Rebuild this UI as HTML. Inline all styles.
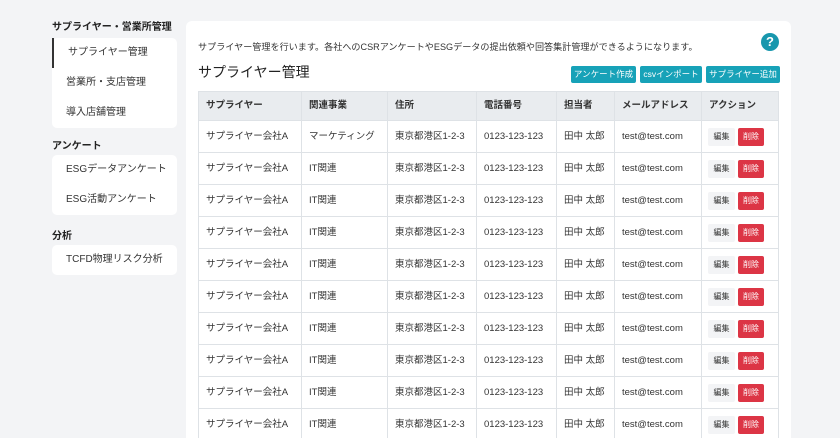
<!DOCTYPE html>
<html><head><meta charset="utf-8"><style>
*{margin:0;padding:0;box-sizing:border-box}
html,body{width:840px;height:438px;overflow:hidden}
body{background:#f3f4f6;font-family:"Liberation Sans","Noto Sans CJK JP",sans-serif;color:#222;position:relative}
.h{position:absolute;left:52px;font-size:10px;font-weight:bold;color:#222;line-height:12px}
.card{position:absolute;left:52px;width:125px;background:#fff;border-radius:5px}
.it{height:30px;line-height:30px;padding-left:14px;font-size:10px;color:#333}
.act{border-left:2px solid #333;padding-left:14px}
.main{position:absolute;left:186px;top:21px;width:605px;height:417px;background:#fff;border-radius:6px 6px 0 0;overflow:hidden}
.desc{position:absolute;left:12px;top:20px;font-size:9.1px;line-height:12px;color:#333}
.help{position:absolute;left:575px;top:12px;width:18px;height:18px;border-radius:50%;background:#1897ad;color:#fff;font-weight:bold;font-size:13px;text-align:center;line-height:18px}
.title{position:absolute;left:12px;top:42px;font-size:14px;line-height:18px;color:#222}
.btn{position:absolute;top:45px;height:17px;line-height:17px;background:#17a2b8;color:#fff;font-size:8.5px;text-align:center;border-radius:2px}
table{position:absolute;left:12px;top:70px;width:581px;border-collapse:collapse;font-size:9.5px}
th{background:#e9ecef;height:29px;text-align:left;padding-left:7px;font-weight:bold;border:1px solid #dee2e6;color:#333;line-height:12px;vertical-align:middle}
td{height:32px;padding-left:7px;border:1px solid #dee2e6;color:#333;line-height:12px;vertical-align:middle}
.e{display:inline-block;vertical-align:middle;width:27px;height:18px;line-height:18px;text-align:center;background:#f3f4f6;font-size:8px;border-radius:2px;margin-left:-1px}
.d{display:inline-block;vertical-align:middle;width:26px;height:18px;line-height:18px;text-align:center;background:#dc3545;color:#fff;font-size:8px;border-radius:2px;margin-left:3px}
</style></head><body>
<div class="h" style="top:22px">サプライヤー・営業所管理</div>
<div class="card" style="top:38px"><div class="it act">サプライヤー管理</div><div class="it">営業所・支店管理</div><div class="it">導入店舗管理</div></div>
<div class="h" style="top:141px">アンケート</div>
<div class="card" style="top:155px"><div class="it">ESGデータアンケート</div><div class="it">ESG活動アンケート</div></div>
<div class="h" style="top:231px">分析</div>
<div class="card" style="top:245px"><div class="it">TCFD物理リスク分析</div></div>
<div class="main">
<div class="desc">サプライヤー管理を行います。各社へのCSRアンケートやESGデータの提出依頼や回答集計管理ができるようになります。</div>
<div class="help">?</div>
<div class="title">サプライヤー管理</div>
<div class="btn" style="left:385px;width:65px">アンケート作成</div>
<div class="btn" style="left:454px;width:62px">csvインポート</div>
<div class="btn" style="left:520px;width:74px">サプライヤー追加</div>
<table>
<tr><th style="width:103px">サプライヤー</th><th style="width:86px">関連事業</th><th style="width:89px">住所</th><th style="width:80px">電話番号</th><th style="width:58px">担当者</th><th style="width:87px">メールアドレス</th><th>アクション</th></tr>
<tr><td>サプライヤー会社A</td><td>マーケティング</td><td>東京都港区1-2-3</td><td>0123-123-123</td><td>田中 太郎</td><td>test@test.com</td><td><span class="e">編集</span><span class="d">削除</span></td></tr>
<tr><td>サプライヤー会社A</td><td>IT関連</td><td>東京都港区1-2-3</td><td>0123-123-123</td><td>田中 太郎</td><td>test@test.com</td><td><span class="e">編集</span><span class="d">削除</span></td></tr>
<tr><td>サプライヤー会社A</td><td>IT関連</td><td>東京都港区1-2-3</td><td>0123-123-123</td><td>田中 太郎</td><td>test@test.com</td><td><span class="e">編集</span><span class="d">削除</span></td></tr>
<tr><td>サプライヤー会社A</td><td>IT関連</td><td>東京都港区1-2-3</td><td>0123-123-123</td><td>田中 太郎</td><td>test@test.com</td><td><span class="e">編集</span><span class="d">削除</span></td></tr>
<tr><td>サプライヤー会社A</td><td>IT関連</td><td>東京都港区1-2-3</td><td>0123-123-123</td><td>田中 太郎</td><td>test@test.com</td><td><span class="e">編集</span><span class="d">削除</span></td></tr>
<tr><td>サプライヤー会社A</td><td>IT関連</td><td>東京都港区1-2-3</td><td>0123-123-123</td><td>田中 太郎</td><td>test@test.com</td><td><span class="e">編集</span><span class="d">削除</span></td></tr>
<tr><td>サプライヤー会社A</td><td>IT関連</td><td>東京都港区1-2-3</td><td>0123-123-123</td><td>田中 太郎</td><td>test@test.com</td><td><span class="e">編集</span><span class="d">削除</span></td></tr>
<tr><td>サプライヤー会社A</td><td>IT関連</td><td>東京都港区1-2-3</td><td>0123-123-123</td><td>田中 太郎</td><td>test@test.com</td><td><span class="e">編集</span><span class="d">削除</span></td></tr>
<tr><td>サプライヤー会社A</td><td>IT関連</td><td>東京都港区1-2-3</td><td>0123-123-123</td><td>田中 太郎</td><td>test@test.com</td><td><span class="e">編集</span><span class="d">削除</span></td></tr>
<tr><td>サプライヤー会社A</td><td>IT関連</td><td>東京都港区1-2-3</td><td>0123-123-123</td><td>田中 太郎</td><td>test@test.com</td><td><span class="e">編集</span><span class="d">削除</span></td></tr>
</table>
</div>
</body></html>
